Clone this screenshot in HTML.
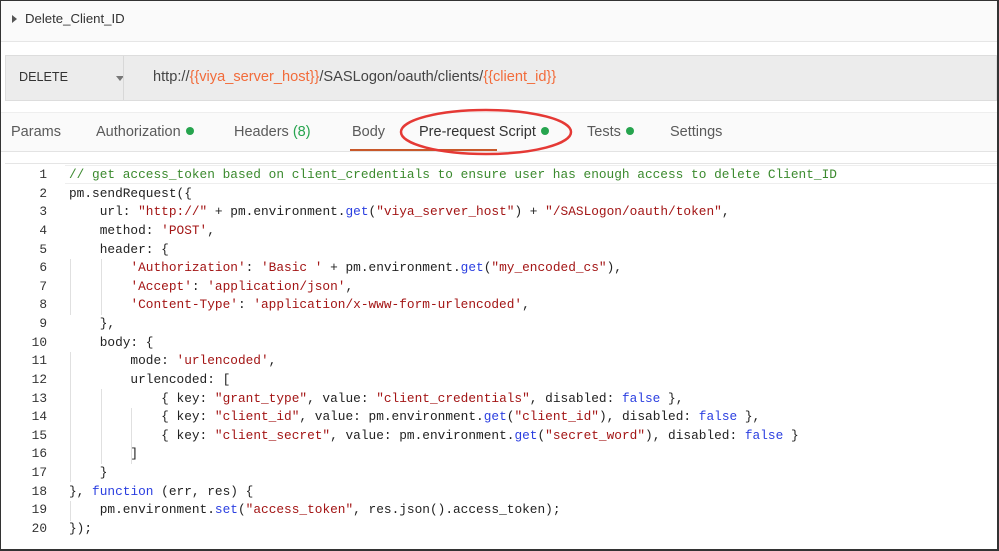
<!DOCTYPE html>
<html><head><style>
*{margin:0;padding:0;box-sizing:border-box}
body{width:999px;height:551px;overflow:hidden;background:#fff;font-family:"Liberation Sans",sans-serif;position:relative}
.frame{position:absolute;left:0;top:0;width:999px;height:551px;border:1px solid #333;border-right:2px solid #333;border-bottom:2px solid #333}
.title{position:absolute;left:1px;top:1px;width:996px;height:41px;background:#fafafa;border-bottom:1px solid #e6e6e6}
.title span{position:absolute;left:24px;top:10px;font-size:13.2px;color:#333}
.tri{position:absolute;left:11px;top:14px;width:0;height:0;border-left:5px solid #555;border-top:4px solid transparent;border-bottom:4px solid transparent}
.bar{position:absolute;left:5px;top:55px;width:992px;height:46px;background:#ececec;border:1px solid #ddd}
.bar .m{position:absolute;left:13px;top:14px;font-size:12.6px;color:#333}
.bar .dd{position:absolute;left:110px;top:20px;border-top:5px solid #777;border-left:4px solid transparent;border-right:4px solid transparent}
.bar .div{position:absolute;left:117px;top:0;width:1px;height:44px;background:#d8d8d8}
.bar .u{position:absolute;left:147px;top:13px;font-size:14.6px;color:#444}
.o{color:#f26b3a}
.tabs{position:absolute;left:1px;top:112px;width:996px;height:40px;border-top:1px solid #eee;border-bottom:1px solid #e3e3e3;background:#fafafa}
.t{position:absolute;top:11px;font-size:14.5px;color:#5a5a5a}
.dot{display:inline-block;width:8px;height:8px;border-radius:50%;background:#26a44e;margin-left:5px;vertical-align:1px}
.code{position:absolute;left:5px;top:163px;width:992px;height:380px;background:#fff;border-top:1px solid #e5e5e5}
pre{position:absolute;left:64px;top:2px;font-family:"Liberation Mono",monospace;font-size:12.8px;line-height:18.63px;color:#222}
.ln{position:absolute;left:0;top:2px;width:42px;text-align:right;font-family:"Liberation Mono",monospace;font-size:12.8px;line-height:18.63px;color:#333}
.c{color:#3b8a2e}.s{color:#a31515}.k{color:#2a3ee0}
.hl{position:absolute;left:60px;top:1px;width:932px;height:19px;border-top:1px solid #eee;border-bottom:1px solid #eee}
.g{position:absolute;width:1px;background:#e0e0e0}
</style></head><body>
<div class="title"><div class="tri"></div><span>Delete_Client_ID</span></div>
<div class="bar"><span class="m">DELETE</span><div class="dd"></div><div class="div"></div>
<span class="u">http://<span class="o">{{viya_server_host}}</span>/SASLogon/oauth/clients/<span class="o">{{client_id}}</span></span></div>
<div class="tabs">
<span class="t" style="left:10px">Params</span>
<span class="t" style="left:95px">Authorization<span class="dot"></span></span>
<span class="t" style="left:233px">Headers <span style="color:#26a44e">(8)</span></span>
<span class="t" style="left:351px">Body</span>
<span class="t" style="left:418px;color:#333">Pre-request Script<span class="dot"></span></span>
<span class="t" style="left:586px">Tests<span class="dot"></span></span>
<span class="t" style="left:669px">Settings</span>
<div style="position:absolute;left:349px;top:36px;width:147px;height:2px;background:#c8582a"></div>
</div>
<svg style="position:absolute;left:0;top:0" width="999" height="551"><ellipse cx="486" cy="132" rx="85" ry="22" fill="none" stroke="#e53935" stroke-width="2.5"/></svg>
<div class="code">
<div class="hl"></div>
<div class="g" style="left:65px;top:95px;height:56px"></div>
<div class="g" style="left:96px;top:95px;height:56px"></div>
<div class="g" style="left:65px;top:188px;height:130px"></div>
<div class="g" style="left:96px;top:225px;height:75px"></div>
<div class="g" style="left:126px;top:244px;height:56px"></div>
<div class="g" style="left:65px;top:337px;height:20px"></div>
<div class="ln">1<br>2<br>3<br>4<br>5<br>6<br>7<br>8<br>9<br>10<br>11<br>12<br>13<br>14<br>15<br>16<br>17<br>18<br>19<br>20</div>
<pre><span class="c">// get access_token based on client_credentials to ensure user has enough access to delete Client_ID</span>
pm.sendRequest({
    url: <span class="s">"http://"</span> + pm.environment.<span class="k">get</span>(<span class="s">"viya_server_host"</span>) + <span class="s">"/SASLogon/oauth/token"</span>,
    method: <span class="s">'POST'</span>,
    header: {
        <span class="s">'Authorization'</span>: <span class="s">'Basic '</span> + pm.environment.<span class="k">get</span>(<span class="s">"my_encoded_cs"</span>),
        <span class="s">'Accept'</span>: <span class="s">'application/json'</span>,
        <span class="s">'Content-Type'</span>: <span class="s">'application/x-www-form-urlencoded'</span>,
    },
    body: {
        mode: <span class="s">'urlencoded'</span>,
        urlencoded: [
            { key: <span class="s">"grant_type"</span>, value: <span class="s">"client_credentials"</span>, disabled: <span class="k">false</span> },
            { key: <span class="s">"client_id"</span>, value: pm.environment.<span class="k">get</span>(<span class="s">"client_id"</span>), disabled: <span class="k">false</span> },
            { key: <span class="s">"client_secret"</span>, value: pm.environment.<span class="k">get</span>(<span class="s">"secret_word"</span>), disabled: <span class="k">false</span> }
        ]
    }
}, <span class="k">function</span> (err, res) {
    pm.environment.<span class="k">set</span>(<span class="s">"access_token"</span>, res.json().access_token);
});</pre>
</div>
<div class="frame"></div>
</body></html>
